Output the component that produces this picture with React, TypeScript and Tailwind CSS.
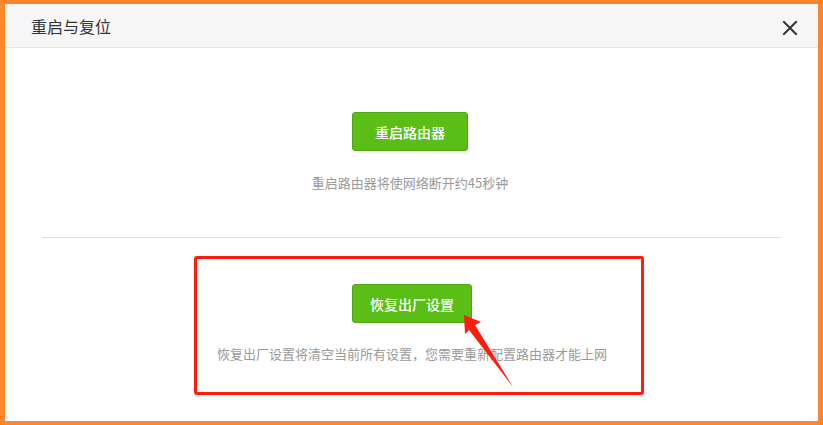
import React from 'react';

const font = { fontFamily: '"Noto Sans CJK SC", "Noto Sans", sans-serif' };

export default function App() {
  return (
    <div
      className="relative w-[823px] h-[425px] bg-white border-[#fd852c] border-t-4 border-b-4 border-l-[5px] border-r-[5px] flex flex-col overflow-hidden"
      style={font}
    >
      {/* Header */}
      <div className="h-[44px] shrink-0 bg-[#f6f6f6] border-b border-[#e6e6e6] flex items-center justify-between pl-[26px] pr-[20px]">
        <span className="text-[16px] leading-none text-[#333]">重启与复位</span>
        <svg width="16" height="16" viewBox="0 0 16 16" className="mt-[4px]">
          <path d="M2 2 L14 14 M14 2 L2 14" stroke="#333" strokeWidth="2" strokeLinecap="square" />
        </svg>
      </div>

      {/* Reboot section */}
      <div className="flex flex-col items-center pt-[64px] pr-[3px]">
        <button className="w-[116px] h-[39px] rounded-[3px] bg-[#5abe16] border border-[#4fa812] text-white text-[14px] leading-none font-medium">
          重启路由器
        </button>
        <p className="mt-[22px] text-[13px] leading-[20px] text-[#9a9a9a]">重启路由器将使网络断开约45秒钟</p>
      </div>

      <div className="mx-[37px] mt-[44px] h-px bg-[#dedede]" />

      {/* Reset section (highlighted) */}
      <div className="ml-[189px] mt-[18px] w-[450px] h-[139px] border-[3px] border-[#ff1c0d] rounded-[3px] flex flex-col items-center pt-[25px] pr-[14px]">
        <button className="w-[120px] h-[39px] rounded-[3px] bg-[#5abe16] border border-[#4fa812] text-white text-[14px] leading-none font-medium">
          恢复出厂设置
        </button>
        <p className="mt-[21px] text-[13px] leading-[20px] text-[#9a9a9a]">
          恢复出厂设置将清空当前所有设置，您需要重新配置路由器才能上网
        </p>
      </div>

      {/* Annotation arrow */}
      <svg className="absolute left-0 top-0 pointer-events-none" width="813" height="417" viewBox="5 4 813 417">
        <polygon
          points="464,315 481,322 475,325 513,387 469,330 465,334"
          fill="#ff1c0d"
        />
      </svg>
    </div>
  );
}
